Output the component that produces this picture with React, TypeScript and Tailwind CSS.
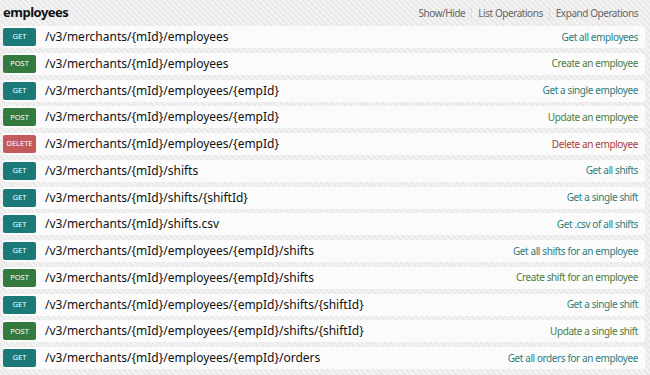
import React from "react";

type Op = { m: "GET" | "POST" | "DELETE"; path: string; sum: string };

const ops: Op[] = [
  { m: "GET", path: "/v3/merchants/{mId}/employees", sum: "Get all employees" },
  { m: "POST", path: "/v3/merchants/{mId}/employees", sum: "Create an employee" },
  { m: "GET", path: "/v3/merchants/{mId}/employees/{empId}", sum: "Get a single employee" },
  { m: "POST", path: "/v3/merchants/{mId}/employees/{empId}", sum: "Update an employee" },
  { m: "DELETE", path: "/v3/merchants/{mId}/employees/{empId}", sum: "Delete an employee" },
  { m: "GET", path: "/v3/merchants/{mId}/shifts", sum: "Get all shifts" },
  { m: "GET", path: "/v3/merchants/{mId}/shifts/{shiftId}", sum: "Get a single shift" },
  { m: "GET", path: "/v3/merchants/{mId}/shifts.csv", sum: "Get .csv of all shifts" },
  { m: "GET", path: "/v3/merchants/{mId}/employees/{empId}/shifts", sum: "Get all shifts for an employee" },
  { m: "POST", path: "/v3/merchants/{mId}/employees/{empId}/shifts", sum: "Create shift for an employee" },
  { m: "GET", path: "/v3/merchants/{mId}/employees/{empId}/shifts/{shiftId}", sum: "Get a single shift" },
  { m: "POST", path: "/v3/merchants/{mId}/employees/{empId}/shifts/{shiftId}", sum: "Update a single shift" },
  { m: "GET", path: "/v3/merchants/{mId}/employees/{empId}/orders", sum: "Get all orders for an employee" },
];

const badge: Record<Op["m"], string> = {
  GET: "bg-[#1b7a77]",
  POST: "bg-[#347a3e]",
  DELETE: "bg-[#c45a5b]",
};
const sumColor: Record<Op["m"], string> = {
  GET: "text-[#2e7d7a]",
  POST: "text-[#4b7d3f]",
  DELETE: "text-[#a8403f]",
};

export default function App() {
  return (
    <div
      className="w-[650px] h-[375px] overflow-hidden bg-[#eeeeee] bg-[repeating-linear-gradient(45deg,#f3f3f3_0px,#f3f3f3_2px,#e9e9e9_2px,#e9e9e9_4px)]"
      style={{ fontFamily: '"Noto Sans", "Open Sans", sans-serif' }}
    >
      <div className="flex items-center justify-between h-[26px] pl-[3px] pr-[12px]">
        <span className="text-[13px] font-bold text-[#111] leading-none tracking-[-0.5px] -mt-[2px]">employees</span>
        <div className="flex items-center text-[10px] tracking-[-0.45px] text-[#666]">
          <span className="pr-[6px]">Show/Hide</span>
          <span className="w-px h-[12px] bg-[#ddd]" />
          <span className="px-[6px]">List Operations</span>
          <span className="w-px h-[12px] bg-[#ddd]" />
          <span className="pl-[6px]">Expand Operations</span>
        </div>
      </div>
      <div className="flex flex-col gap-[4.75px] pl-[3px] pr-[5px]">
        {ops.map((o, i) => (
          <div
            key={i}
            className="flex items-center h-[22px] bg-[#fbfbfb] rounded-[3px] pr-[7px]"
          >
            <span
              className={`${badge[o.m]} w-[33px] h-[18px] rounded-[2px] flex items-center justify-center text-white text-[7.5px] leading-none`}
            >
              {o.m}
            </span>
            <span className="ml-[9px] text-[12px] text-[#111]">{o.path}</span>
            <span className={`ml-auto text-[10px] tracking-[-0.4px] ${sumColor[o.m]}`}>{o.sum}</span>
          </div>
        ))}
      </div>
    </div>
  );
}
